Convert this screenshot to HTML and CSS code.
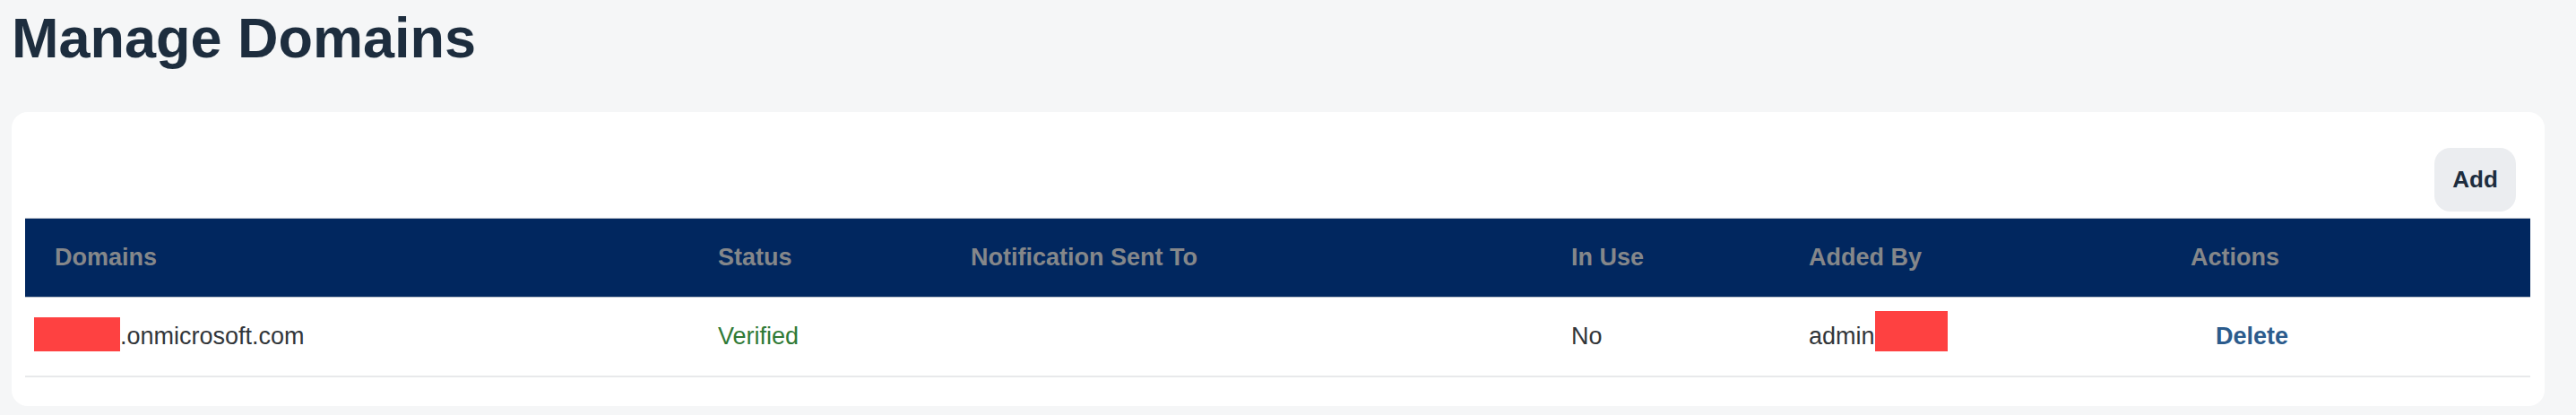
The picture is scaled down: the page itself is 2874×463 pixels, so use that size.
FILE: index.html
```html
<!DOCTYPE html>
<html lang="en">
<head>
  <meta charset="UTF-8">
  <meta name="viewport" content="width=device-width, initial-scale=1">
  <title>Manage Domains</title>
  <link rel="stylesheet" href="styles.css">
</head>
<body>

<div class="page">

  <h1 class="page-title">Manage Domains</h1>

  <div class="card">
    <div class="toolbar">
      <button class="btn-add" type="button">Add</button>
    </div>

    <table class="domains">
      <colgroup>
        <col class="col-domain">
        <col class="col-status">
        <col class="col-notify">
        <col class="col-inuse">
        <col class="col-added">
        <col class="col-actions">
      </colgroup>
      <thead>
        <tr>
          <th class="first">Domains</th>
          <th>Status</th>
          <th>Notification Sent To</th>
          <th>In Use</th>
          <th>Added By</th>
          <th>Actions</th>
        </tr>
      </thead>
      <tbody>
        <tr>
          <td class="first"><span class="redact redact-domain"></span>.onmicrosoft.com</td>
          <td class="verified">Verified</td>
          <td></td>
          <td>No</td>
          <td>admin<span class="redact redact-user"></span></td>
          <td class="actions"><a href="#" class="link-delete">Delete</a></td>
        </tr>
      </tbody>
    </table>
  </div>

</div>

</body>
</html>
```

FILE: styles.css
```css
body {
  margin: 0;
  background-color: #f5f6f7;
  font-family: 'Liberation Sans', Arial, sans-serif;
  color: #32363a;
}

.page {
  padding: 11px 35px 10px 13px;
}

.page-title {
  margin: 0;
  font-size: 63px;
  line-height: 1;
  font-weight: 700;
  color: #1d2d3e;
}

.card {
  margin-top: 51px;
  background: #fff;
  border-radius: 18px;
  padding: 40px 16px 32px 15px;
}

.toolbar {
  display: flex;
  justify-content: flex-end;
  margin-bottom: 7px;
}

.btn-add {
  width: 91px;
  height: 71px;
  margin-right: 16px;
  border: none;
  border-radius: 18px;
  background: #ebedf0;
  font-family: inherit;
  font-size: 26px;
  font-weight: 700;
  color: #1d2d3e;
  cursor: pointer;
}

.domains {
  width: 100%;
  border-collapse: collapse;
  table-layout: fixed;
}

.col-domain { width: 773px; }
.col-status { width: 282px; }
.col-notify { width: 670px; }
.col-inuse { width: 265px; }
.col-added { width: 426px; }

.domains thead tr {
  background: #01275f;
  border-top: 1px solid #b9c0ca;
  border-bottom: 1px solid #b9c0ca;
}

.domains th {
  height: 87px;
  padding: 0;
  text-align: left;
  font-size: 27px;
  font-weight: 700;
  color: #85878a;
}

.domains th.first {
  padding-left: 33px;
}

.domains td {
  height: 87px;
  padding: 0;
  font-size: 27px;
  color: #32363a;
  border-bottom: 2px solid #e8e9eb;
}

.domains td.first {
  padding-left: 10px;
}

.domains td.verified {
  color: #2f7a36;
}

.domains td.actions {
  padding-left: 28px;
}

.link-delete {
  color: #2b5b8c;
  font-weight: 700;
  text-decoration: none;
}

/* redaction boxes, kept out of the line height */
.redact {
  display: inline-block;
  background: #fe4141;
  vertical-align: -5px;
  margin-bottom: -3px;
}

.redact-domain {
  width: 96px;
  height: 38px;
  margin-top: -6px;
}

.redact-user {
  width: 81px;
  height: 45px;
  margin-top: -13px;
}
```
